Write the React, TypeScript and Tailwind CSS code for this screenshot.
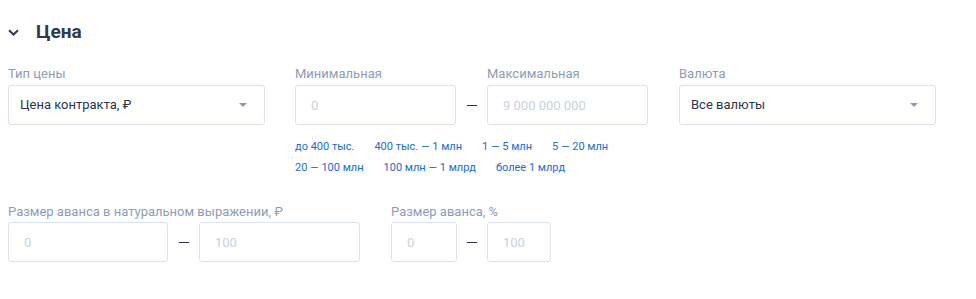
import { useState } from "react";

const priceRanges = [
  "до 400 тыс.",
  "400 тыс. — 1 млн",
  "1 — 5 млн",
  "5 — 20 млн",
  "20 — 100 млн",
  "100 млн — 1 млрд",
  "более 1 млрд",
];

function Label({ children }: { children: React.ReactNode }) {
  return <div className="mb-[3px] text-[13px] leading-4 text-[#8e9cb6]">{children}</div>;
}

function Select({ value }: { value: string }) {
  return (
    <div className="flex h-10 items-center justify-between rounded-[3px] border border-[#dce4ee] bg-white pl-[11px] pr-[17px] text-[13px] text-[#2b3549]">
      <span>{value}</span>
      <span className="h-0 w-0 border-x-4 border-t-4 border-x-transparent border-t-[#8d99b2]" />
    </div>
  );
}

function NumInput({ placeholder, className = "" }: { placeholder: string; className?: string }) {
  const [v, setV] = useState("");
  return (
    <input
      value={v}
      onChange={(e) => setV(e.target.value)}
      placeholder={placeholder}
      className={`h-10 rounded-[3px] border border-[#dce4ee] bg-white px-[15px] text-[13px] text-[#2b3549] outline-none placeholder:text-[#c8d2df] ${className}`}
    />
  );
}

function Dash() {
  return <div className="h-px w-[10px] bg-[#2b3549]" />;
}

export default function App() {
  return (
    <section className="min-h-[299px] bg-white px-2 pt-[18px] font-['Roboto',sans-serif]">
      {/* Header */}
      <div className="flex h-7 items-center gap-[17px]">
        <svg width="11" height="7" viewBox="0 0 11 7" fill="none" className="mt-[1px]">
          <path d="M1 1.2L5.5 5.5L10 1.2" stroke="#2e3a52" strokeWidth="2" />
        </svg>
        <h2 className="text-[19px] font-bold text-[#2e3a52]">Цена</h2>
      </div>

      {/* Price row */}
      <div className="mt-5 grid grid-cols-[257px_354px_257px] gap-x-[30px]">
        <div>
          <Label>Тип цены</Label>
          <Select value="Цена контракта, ₽" />
        </div>

        <div>
          <div className="flex items-end">
            <div className="w-[161px]">
              <Label>Минимальная</Label>
              <NumInput placeholder="0" className="w-[161px]" />
            </div>
            <div className="flex h-10 w-[31px] items-center justify-center">
              <Dash />
            </div>
            <div className="w-[161px]">
              <Label>Максимальная</Label>
              <NumInput placeholder="9 000 000 000" className="w-[161px]" />
            </div>
          </div>
          <div className="mt-[14px] flex w-[353px] flex-wrap gap-x-5 gap-y-[5px] text-[11px] leading-4 text-[#1a6dd3]">
            {priceRanges.map((r) => (
              <a key={r} href="#" className="hover:underline">
                {r}
              </a>
            ))}
          </div>
        </div>

        <div>
          <Label>Валюта</Label>
          <Select value="Все валюты" />
        </div>
      </div>

      {/* Advance row */}
      <div className="mt-7 flex gap-x-[31px]">
        <div className="w-[352px]">
          <div className="mb-[2px] text-[13px] leading-4 text-[#8e9cb6]">
            Размер аванса в натуральном выражении, ₽
          </div>
          <div className="flex items-center justify-between">
            <NumInput placeholder="0" className="w-[160px]" />
            <Dash />
            <NumInput placeholder="100" className="w-[161px]" />
          </div>
        </div>
        <div className="w-[160px]">
          <div className="mb-[2px] text-[13px] leading-4 text-[#8e9cb6]">Размер аванса, %</div>
          <div className="flex items-center justify-between">
            <NumInput placeholder="0" className="w-[66px]" />
            <Dash />
            <NumInput placeholder="100" className="w-[64px]" />
          </div>
        </div>
      </div>
    </section>
  );
}
